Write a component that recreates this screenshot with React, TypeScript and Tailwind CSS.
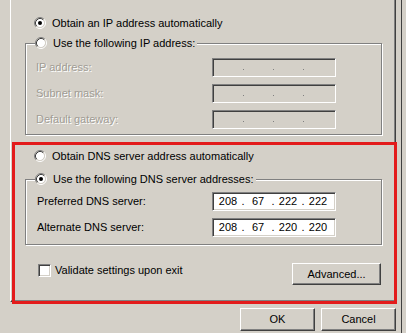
import React from "react";

function Radio({ checked }: { checked: boolean }) {
  return (
    <svg width="12" height="12" viewBox="0 0 12 12" className="shrink-0">
      <circle cx="6" cy="6" r="4.2" fill="#fff" />
      <path d="M2.11 9.89 A5.5 5.5 0 0 1 9.89 2.11" fill="none" stroke="#808080" strokeWidth="1" />
      <path d="M9.89 2.11 A5.5 5.5 0 0 1 2.11 9.89" fill="none" stroke="#ffffff" strokeWidth="1" />
      <path d="M2.82 9.18 A4.5 4.5 0 0 1 9.18 2.82" fill="none" stroke="#404040" strokeWidth="1" />
      <path d="M9.18 2.82 A4.5 4.5 0 0 1 2.82 9.18" fill="none" stroke="#d4d0c8" strokeWidth="1" />
      {checked && <circle cx="6" cy="6" r="2" fill="#000" />}
    </svg>
  );
}

function IpField({ values, disabled }: { values?: string[]; disabled?: boolean }) {
  const v = values ?? ["", "", "", ""];
  return (
    <div
      className={
        "w-[124px] h-[19px] border border-t-[#808080] border-l-[#808080] border-b-white border-r-white shadow-[inset_1px_1px_0_#404040,inset_-1px_-1px_0_#d4d0c8] flex items-center pl-[3px] " +
        (disabled ? "bg-[#d4d0c8] text-[#808080]" : "bg-white text-black")
      }
    >
      {v.map((o, i) => (
        <React.Fragment key={i}>
          <span className="w-[24px] text-center leading-none">{o}</span>
          {i < 3 &&
            (disabled ? (
              <span className="w-[6px] flex justify-center items-center pt-[3px]">
                <span className="w-px h-px bg-[#808080]" />
              </span>
            ) : (
              <span className="w-[6px] text-center leading-none">.</span>
            ))}
        </React.Fragment>
      ))}
    </div>
  );
}

function Button({ label, w }: { label: string; w: string }) {
  return (
    <div
      className={
        w +
        " h-[23px] flex items-center justify-center border border-t-white border-l-white border-r-[#404040] border-b-[#404040] shadow-[inset_-1px_-1px_0_#808080] bg-[#d4d0c8] text-black"
      }
    >
      {label}
    </div>
  );
}

export default function App() {
  const disabledText = "text-[#a09c94] [text-shadow:1px_1px_0_#ffffff]";
  return (
    <div className="w-[406px] h-[333px] bg-[#d4d0c8] flex overflow-hidden relative font-['Liberation_Sans',Arial,sans-serif] text-[11px] text-black antialiased">
      {/* left strip */}
      <div className="w-[10px] shrink-0" />

      {/* main column */}
      <div className="w-[386px] shrink-0 flex flex-col">
        {/* tab panel */}
        <div className="h-[302px] border-l border-l-white border-r border-r-[#404040] border-b border-b-[#404040] shadow-[inset_-1px_-1px_0_#808080] pl-[14px] flex flex-col">
          {/* obtain ip automatically */}
          <div className="mt-[16px] h-[14px] flex items-center gap-[6px] pl-[9px]">
            <Radio checked />
            <span>Obtain an IP address automatically</span>
          </div>

          {/* static IP group */}
          <fieldset className="mt-[6px] w-[357px] border border-[#808080] shadow-[inset_1px_1px_0_#ffffff,1px_1px_0_#ffffff] pt-[8px] pb-[5px] flex flex-col gap-[7px]">
            <legend className="ml-[9px] h-[14px] flex items-center gap-[6px] pr-[2px] bg-[#d4d0c8]">
              <Radio checked={false} />
              <span>Use the following IP address:</span>
            </legend>
            {["IP address:", "Subnet mask:", "Default gateway:"].map((l) => (
              <div key={l} className="flex items-center pl-[10px]">
                <span className={"w-[176px] " + disabledText}>{l}</span>
                <IpField disabled />
              </div>
            ))}
          </fieldset>

          {/* obtain DNS automatically */}
          <div className="mt-[14px] h-[14px] flex items-center gap-[6px] pl-[9px]">
            <Radio checked={false} />
            <span>Obtain DNS server address automatically</span>
          </div>

          {/* DNS group */}
          <fieldset className="mt-[9px] w-[357px] border border-[#808080] shadow-[inset_1px_1px_0_#ffffff,1px_1px_0_#ffffff] pt-[6px] pb-[7px] flex flex-col gap-[7px]">
            <legend className="ml-[9px] h-[14px] flex items-center gap-[6px] pr-[2px] bg-[#d4d0c8]">
              <Radio checked />
              <span>Use the following DNS server addresses:</span>
            </legend>
            <div className="flex items-center pl-[11px]">
              <span className="w-[175px]">Preferred DNS server:</span>
              <IpField values={["208", "67", "222", "222"]} />
            </div>
            <div className="flex items-center pl-[11px]">
              <span className="w-[175px]">Alternate DNS server:</span>
              <IpField values={["208", "67", "220", "220"]} />
            </div>
          </fieldset>

          {/* validate + advanced */}
          <div className="mt-[18px] w-[356px] flex items-start justify-between">
            <div className="flex items-center gap-[4px] pl-[13px] h-[14px]">
              <div className="w-[13px] h-[13px] bg-white border border-t-[#808080] border-l-[#808080] border-b-white border-r-white shadow-[inset_1px_1px_0_#404040,inset_-1px_-1px_0_#d4d0c8]" />
              <span>Validate settings upon exit</span>
            </div>
            <Button label="Advanced..." w="w-[89px] !h-[22px]" />
          </div>
        </div>

        {/* dialog buttons */}
        <div className="mt-[6px] flex justify-end gap-[6px]">
          <Button label="OK" w="w-[75px]" />
          <Button label="Cancel" w="w-[75px]" />
        </div>
      </div>

      {/* right strip */}
      <div className="flex-1 ml-[5px] border-l border-l-[#404040]" />

      {/* red annotation box */}
      <div className="absolute left-[12px] top-[142px] w-[385px] h-[162px] border-[3px] border-[#e31b1b] pointer-events-none" />
    </div>
  );
}
